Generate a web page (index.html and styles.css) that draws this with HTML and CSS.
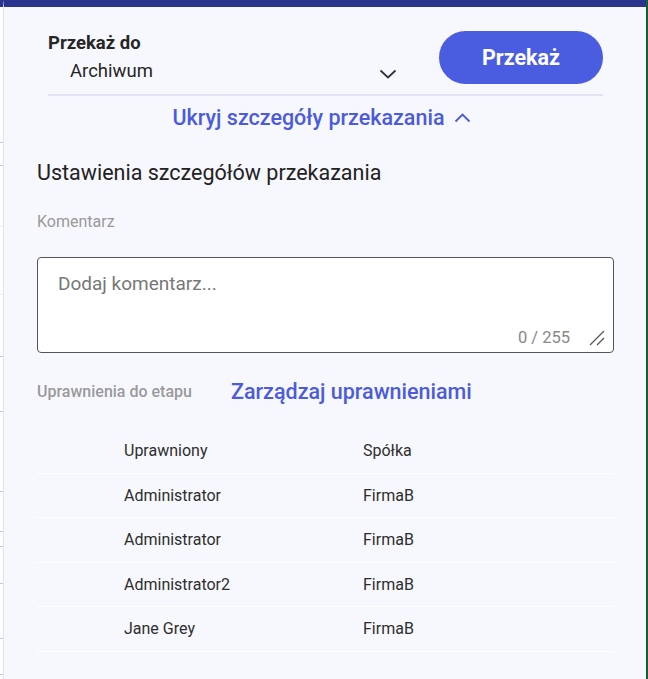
FILE: index.html
```html
<html>
<head>
	<meta charset="utf-8">
	<link rel="stylesheet" href="styles.css">
</head>
<body>
	<div class="page">
		<div class="edge">
			<div class="edge-line" style="height: 135px"></div>
			<div class="edge-line" style="height: 22px"></div>
			<div class="edge-line faint" style="height: 60px"></div>
			<div class="edge-line faint" style="height: 67px"></div>
			<div class="edge-line" style="height: 61px"></div>
			<div class="edge-line" style="height: 54px"></div>
			<div class="edge-line" style="height: 79px"></div>
			<div class="edge-line" style="height: 39px"></div>
			<div class="edge-line" style="height: 14px"></div>
			<div class="edge-line" style="height: 36px"></div>
			<div class="edge-line" style="height: 54px"></div>
			<div class="edge-line" style="height: 35px"></div>
		</div>

		<div class="panel">
			<div class="header">
				<div class="target">
					<div class="target-label">Przekaż do</div>
					<div class="target-select">
						<span>Archiwum</span>
						<svg width="18" height="10" viewBox="0 0 18 10"><polyline points="1.5,1.5 9,8.5 16.5,1.5" fill="none" stroke="#333" stroke-width="1.8"/></svg>
					</div>
				</div>
				<button class="send">Przekaż</button>
			</div>

			<div class="toggle">
				<span>Ukryj szczegóły przekazania</span>
				<svg width="17" height="10" viewBox="0 0 17 10"><polyline points="1.5,8.5 8.5,1.5 15.5,8.5" fill="none" stroke="#4b5bdb" stroke-width="1.8"/></svg>
			</div>

			<h2 class="section-title">Ustawienia szczegółów przekazania</h2>

			<div class="field-label">Komentarz</div>
			<div class="field">
				<div class="placeholder">Dodaj komentarz...</div>
				<div class="field-foot">
					<span class="counter">0 / 255</span>
					<svg width="16" height="16" viewBox="0 0 16 16"><line x1="1" y1="15" x2="15" y2="1" stroke="#555" stroke-width="1.3"/><line x1="8" y1="15" x2="15" y2="8" stroke="#555" stroke-width="1.3"/></svg>
				</div>
			</div>

			<div class="perm-row">
				<span class="perm-label">Uprawnienia do etapu</span>
				<a class="perm-link">Zarządzaj uprawnieniami</a>
			</div>

			<div class="table">
				<div class="row head"><span></span><span>Uprawniony</span><span>Spółka</span></div>
				<div class="row"><span></span><span>Administrator</span><span>FirmaB</span></div>
				<div class="row"><span></span><span>Administrator</span><span>FirmaB</span></div>
				<div class="row"><span></span><span>Administrator2</span><span>FirmaB</span></div>
				<div class="row"><span></span><span>Jane Grey</span><span>FirmaB</span></div>
			</div>
		</div>

		<div class="stripe"></div>
	</div>
</body>
</html>
```

FILE: styles.css
```css
html, body {
	margin: 0;
	height: 100%;
}
body {
	font-family: Roboto, "Liberation Sans", sans-serif;
	color: #2a2a2a;
	background: #fff;
}
.page {
	display: flex;
	height: 679px;
	overflow: hidden;
}

.edge {
	width: 4px;
	box-sizing: border-box;
	background: #fff;
	border-right: 1px solid #e2e2f0;
	border-top: 7px solid #2b3590;
}
.edge-line {
	border-bottom: 1px solid #c9c9d6;
}
.edge-line.faint {
	border-bottom-color: #ececf3;
}

.panel {
	flex: 1;
	background: #f7f8fd;
	border-top: 7px solid #2b3590;
	padding: 0 32px 0 33px;
}
.stripe {
	width: 2px;
	background: #145e30;
}

.header {
	display: flex;
	align-items: flex-start;
	margin: 0 11px;
	padding: 23px 0 10px;
	border-bottom: 2px solid #e3e3f6;
}
.target {
	width: 349px;
}
.target-label {
	margin-top: 3px;
	font-size: 18.5px;
	font-weight: 700;
	line-height: 21px;
	color: #262626;
}
.target-select {
	display: flex;
	align-items: center;
	justify-content: space-between;
	box-sizing: border-box;
	height: 29px;
	padding: 5px 0 0 22px;
	font-size: 18.5px;
	color: #262626;
}
.target-select svg {
	margin-top: 5px;
}
.send {
	margin-left: auto;
	margin-top: 1px;
	width: 164px;
	height: 53px;
	border: none;
	border-radius: 27px;
	background: #4a5de0;
	color: #fff;
	font-family: inherit;
	font-size: 21.5px;
	font-weight: 700;
}

.toggle {
	display: flex;
	justify-content: center;
	align-items: center;
	gap: 9px;
	margin-top: 9px;
	margin-right: 8px;
	line-height: 26px;
	font-size: 21.5px;
	font-weight: 500;
	color: #4b5bdb;
}

.section-title {
	margin: 29px 0 0;
	font-size: 21.5px;
	font-weight: 400;
	line-height: 26px;
	color: #222;
}

.field-label {
	margin-top: 26px;
	font-size: 16px;
	line-height: 19px;
	color: #999;
}
.field {
	margin-top: 26px;
	height: 96px;
	box-sizing: border-box;
	border: 1px solid #555;
	border-radius: 4px;
	background: #fff;
	padding: 14px 8px 5px 20px;
	display: flex;
	flex-direction: column;
	justify-content: space-between;
}
.placeholder {
	font-size: 19px;
	line-height: 24px;
	color: #777;
}
.field-foot {
	display: flex;
	justify-content: flex-end;
	align-items: center;
	gap: 19px;
}
.counter {
	font-size: 16.5px;
	color: #888;
}

.perm-row {
	display: flex;
	align-items: center;
	gap: 39px;
	margin-top: 26px;
	height: 24px;
}
.perm-label {
	font-size: 16px;
	font-weight: 500;
	color: #9a9a9a;
}
.perm-link {
	font-size: 21.5px;
	font-weight: 500;
	color: #4b5bdb;
}

.table {
	margin-top: 26px;
}
.row {
	display: grid;
	grid-template-columns: 87px 239px 1fr;
	height: 43.5px;
	align-items: center;
	border-bottom: 1px solid #fff;
	font-size: 16px;
	color: #2e2e2e;
}
```
